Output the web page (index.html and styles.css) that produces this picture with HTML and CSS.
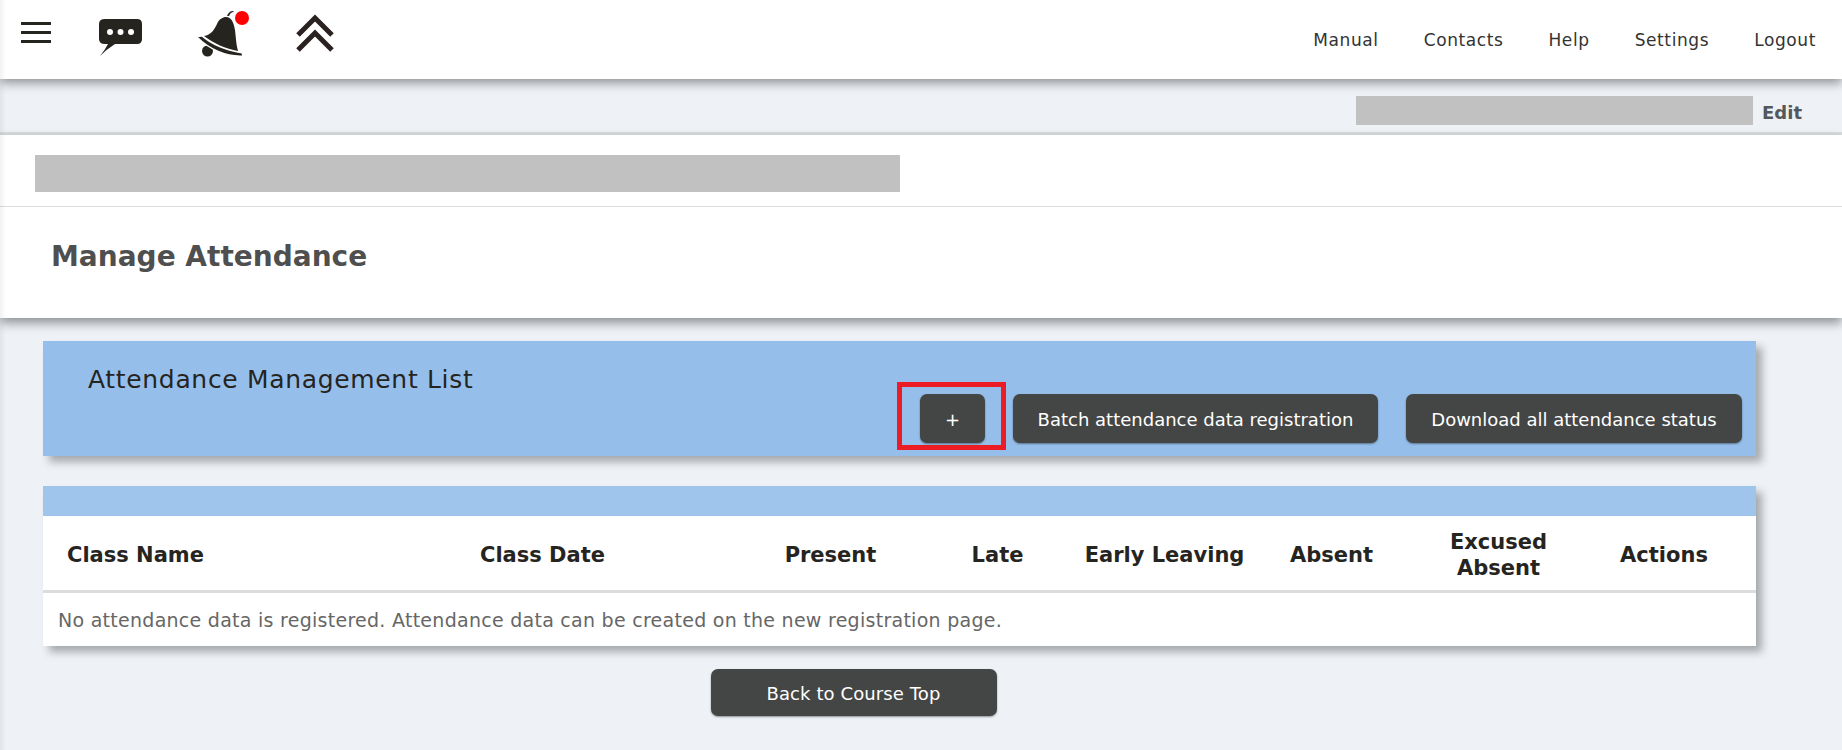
FILE: index.html
```html
<!DOCTYPE html>
<html lang="en">
<head>
    <meta charset="UTF-8">
    <meta name="viewport" content="width=device-width, initial-scale=1.0">
    <title>Manage Attendance</title>
    <link rel="stylesheet" href="styles.css">
</head>
<body>
    <header class="topbar">
        <div class="topbar-icons">
            <div class="menu-icon"><span></span><span></span><span></span></div>
            <svg class="chat-icon" width="44" height="38" viewBox="0 0 44 38">
                <path fill="#26241f" d="M6 0H38Q43 0 43 5V20Q43 25 38 25H16Q8 30 1 37Q6 31 9 25H6Q0 25 0 20V5Q0 0 6 0Z"/>
                <circle cx="11" cy="13" r="3" fill="#fff"/>
                <circle cx="21.500" cy="13" r="3" fill="#fff"/>
                <circle cx="32" cy="13" r="3" fill="#fff"/>
            </svg>
            <svg class="bell-icon" width="52" height="48" viewBox="0 0 52 48">
                <circle cx="9.500" cy="41" r="5.500" fill="#26241f"/>
                <path fill="#26241f" stroke="#fff" stroke-width="1.200" d="M-1 27L4 26C13 34 28 40 44 43L45 46C28 47 11 39 -1 27Z"/>
                <path fill="#26241f" d="M6 26C13 25 16 20 19 14C21 9 25 7 28 7C34 7 36 14 37 20C38 28 38 34 40 41C28 39 15 33 6 26Z"/>
                <path fill="#26241f" d="M29 6C30 3 32 1 35 1L36 2C33 2 32 4 31 6Z"/>
                <circle cx="44" cy="8" r="7" fill="#f00"/>
            </svg>
            <svg class="up-icon" width="42" height="42" viewBox="0 0 42 42">
                <path fill="none" stroke="#2a2220" stroke-width="5" d="M4 22L21 5L38 22M4 37L21 20L38 37"/>
            </svg>
        </div>
        <nav class="topnav">
            <a href="#">Manual</a>
            <a href="#">Contacts</a>
            <a href="#">Help</a>
            <a href="#">Settings</a>
            <a href="#">Logout</a>
        </nav>
    </header>

    <div class="userbar">
        <div class="masked user-mask"></div>
        <a class="edit-link" href="#">Edit</a>
    </div>

    <section class="page-head">
        <div class="course-row">
            <div class="masked course-mask"></div>
        </div>
        <h1>Manage Attendance</h1>
    </section>

    <main class="content">
        <div class="list-panel">
            <h2>Attendance Management List</h2>
            <div class="panel-buttons">
                <div class="highlight"><button class="btn btn-add" type="button">+</button></div>
                <button class="btn btn-batch" type="button">Batch attendance data registration</button>
                <button class="btn btn-download" type="button">Download all attendance status</button>
            </div>
        </div>

        <div class="table-wrap">
            <div class="table-band"></div>
            <table class="attendance">
                <thead>
                    <tr>
                        <th class="col-name">Class Name</th>
                        <th class="col-date">Class Date</th>
                        <th class="col-num">Present</th>
                        <th class="col-num">Late</th>
                        <th class="col-num">Early Leaving</th>
                        <th class="col-num">Absent</th>
                        <th class="col-num">Excused<br>Absent</th>
                        <th class="col-actions">Actions</th>
                    </tr>
                </thead>
                <tbody>
                    <tr>
                        <td colspan="8">No attendance data is registered. Attendance data can be created on the new registration page.</td>
                    </tr>
                </tbody>
            </table>
        </div>

        <div class="back-row">
            <button class="btn btn-back" type="button">Back to Course Top</button>
        </div>
    </main>
</body>
</html>
```

FILE: styles.css
```css
* {
    box-sizing: border-box;
}
html, body {
    height: 100%;
}
body {
    margin: 0;
    background: #eef2f6;
    color: #26241f;
    font-family: "DejaVu Sans", Verdana, sans-serif;
    overflow: hidden;
}
/* faint shade down the left edge of the page */
body::after {
    content: "";
    position: fixed;
    top: 0;
    bottom: 0;
    left: 0;
    z-index: 3;
    width: 6px;
    background: linear-gradient(to right, rgba(0, 0, 0, 0.05), rgba(0, 0, 0, 0));
}
a {
    color: inherit;
    text-decoration: none;
}

/* top bar */
.topbar {
    position: relative;
    z-index: 2;
    display: flex;
    justify-content: space-between;
    height: 79px;
    background: #fff;
    box-shadow: 0 4px 10px rgba(0, 0, 0, 0.4);
}
.topbar-icons {
    display: flex;
    align-items: flex-start;
    padding-left: 21px;
}
.menu-icon {
    display: flex;
    flex-direction: column;
    gap: 6px;
    width: 30px;
    margin-top: 22px;
}
.menu-icon span {
    height: 3px;
    background: #26241f;
}
.chat-icon {
    margin: 19px 0 0 48px;
}
.bell-icon {
    margin: 10px 0 0 55px;
    overflow: visible;
}
.up-icon {
    margin: 13px 0 0 44px;
    filter: blur(0.6px);
}
.topnav {
    display: flex;
    gap: 45px;
    padding: 30px 26px 0 0;
    font-size: 17px;
    letter-spacing: 0.6px;
    line-height: 20px;
    color: #333;
}

/* user bar */
.userbar {
    display: flex;
    justify-content: flex-end;
    align-items: flex-start;
    height: 56px;
    padding: 17px 40px 0 0;
    border-bottom: 3px solid #d8dddd;
}
.masked {
    background: #c1c1c1;
}
.user-mask {
    width: 397px;
    height: 29px;
}
.edit-link {
    margin-left: 9px;
    padding-top: 6px;
    font-size: 18px;
    font-weight: bold;
    color: #54585c;
}

/* page head */
.page-head {
    position: relative;
    z-index: 1;
    height: 183px;
    background: #fff;
    box-shadow: 0 5px 10px rgba(0, 0, 0, 0.4);
}
.course-row {
    height: 72px;
    padding: 20px 0 0 35px;
    border-bottom: 1px solid #ddd;
}
.course-mask {
    width: 865px;
    height: 37px;
}
.page-head h1 {
    margin: 0;
    padding: 33px 0 0 51px;
    font-size: 28px;
    line-height: 34px;
    color: #4f4f4f;
}

/* content */
.content {
    padding: 23px 86px 0 43px;
}
.list-panel {
    position: relative;
    height: 115px;
    background: #95bfea;
    box-shadow: 6px 6px 8px rgba(0, 0, 0, 0.3);
}
.list-panel h2 {
    margin: 0;
    padding: 23px 0 0 45px;
    font-size: 25px;
    line-height: 32px;
    font-weight: normal;
    letter-spacing: 0.67px;
}
.panel-buttons {
    position: absolute;
    top: 41px;
    right: 14px;
    display: flex;
    align-items: flex-start;
}
.highlight {
    width: 109px;
    height: 68px;
    padding: 7px 0 0 18px;
    border: 5px solid #ed1c24;
    margin-right: 7px;
}
.btn {
    height: 49px;
    padding: 2px 0 0;
    border: 0;
    border-radius: 7px;
    background: #444645;
    color: #fff;
    font-family: inherit;
    font-size: 18px;
    box-shadow: 0 1px 2px rgba(0, 0, 0, 0.4);
}
.btn-add {
    width: 65px;
}
.btn-batch {
    width: 365px;
    margin: 12px 28px 0 0;
}
.btn-download {
    width: 336px;
    margin-top: 12px;
}

/* table */
.table-wrap {
    margin-top: 30px;
    background: #fff;
    box-shadow: 6px 6px 8px rgba(0, 0, 0, 0.3);
}
.table-band {
    height: 30px;
    background: #9fc5ec;
}
.attendance {
    width: 100%;
    border-collapse: collapse;
    table-layout: fixed;
}
.attendance th {
    height: 75px;
    padding: 4px 0 0;
    border-bottom: 3px solid #dcdcdc;
    font-size: 21px;
    line-height: 26px;
    text-align: center;
}
.attendance th.col-name,
.attendance th.col-date {
    padding-left: 24px;
    text-align: left;
}
.col-name {
    width: 413px;
}
.col-date {
    width: 291px;
}
.col-num {
    width: 167px;
}
.attendance th.col-actions {
    padding-right: 10px;
}
.attendance td {
    height: 55px;
    padding: 1px 0 0 15px;
    font-size: 19px;
    letter-spacing: 0.27px;
    color: #666;
}

/* bottom */
.back-row {
    display: flex;
    justify-content: center;
    margin-top: 23px;
    padding-right: 92px;
}
.btn-back {
    width: 286px;
    height: 47px;
    letter-spacing: 0.1px;
}
```
